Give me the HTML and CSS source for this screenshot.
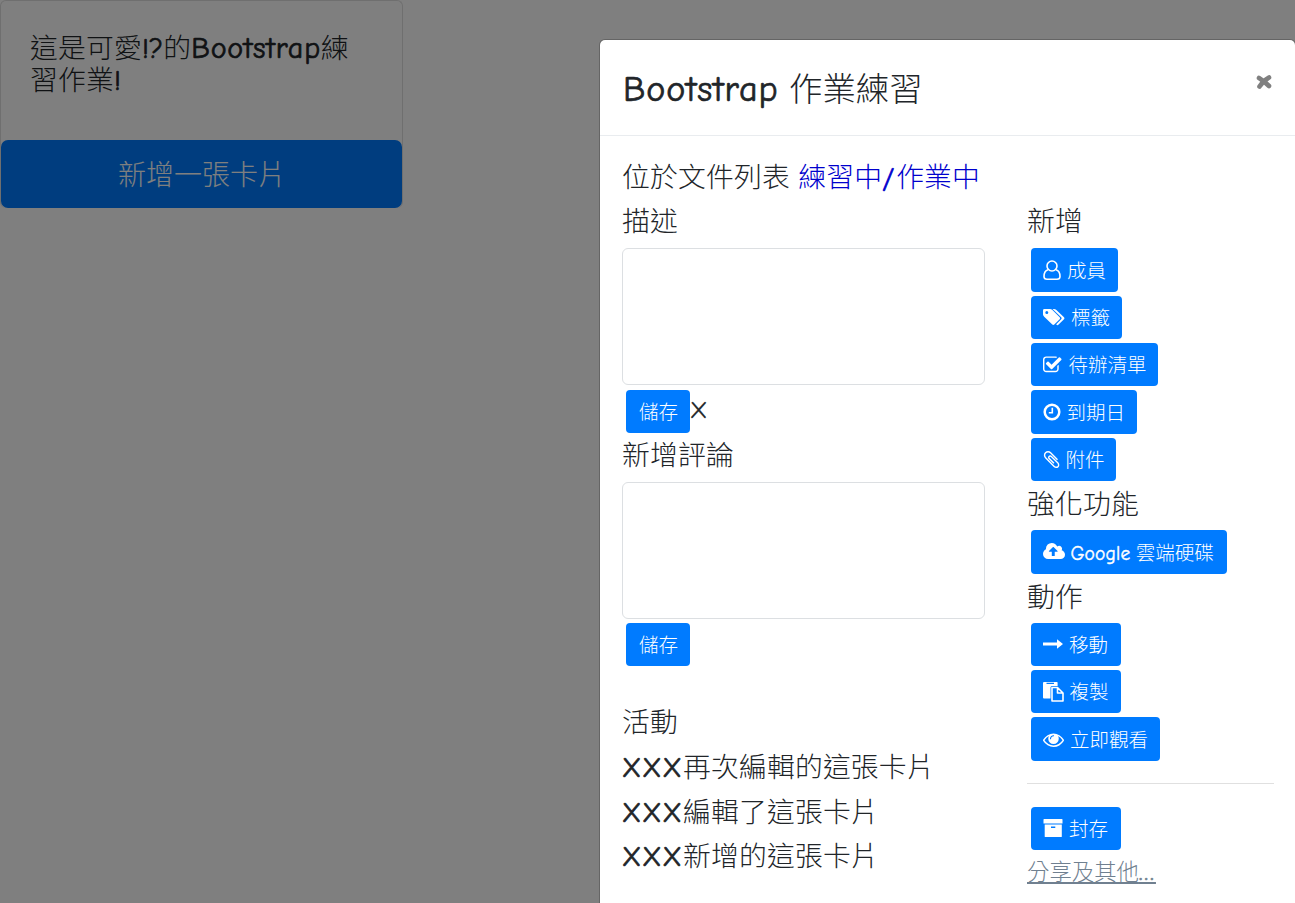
FILE: index.html
```html
<!DOCTYPE html>
<html lang="zh-Hant">
<head>
<meta charset="utf-8">
<title>Bootstrap 作業練習</title>
<link rel="stylesheet" href="styles.css">
</head>
<body>
<main class="card">
  <h5 class="card-title">這是可愛<span class="en card-mark">!?</span>的<span class="en word">Bootstrap</span>練<br>習作業<span class="en">!</span></h5>
  <button class="btn-add">新增一張卡片</button>
</main>
<div class="backdrop"></div>
<div class="modal">
  <header class="modal-header">
    <h4><span class="en word">Bootstrap</span> 作業練習</h4>
    <button class="close" aria-label="Close"><svg width="16" height="14" viewBox="0 0 16 14"><path d="M3 3Q8 6 13 11M13 2.5Q7 6 3.5 11.5" fill="none" stroke="currentColor" stroke-width="4.6" stroke-linecap="round"/></svg></button>
  </header>
  <div class="modal-body">
    <h5>位於文件列表 <span class="path">練習中<span class="en slash">/</span>作業中</span></h5>
    <div class="columns">
      <section class="left">
        <h5>描述</h5>
        <textarea></textarea>
        <div class="save-row"><button class="btn save"><span class="label">儲存</span></button><span class="en cancel">X</span></div>
        <h5>新增評論</h5>
        <textarea></textarea>
        <div class="save-row last"><button class="btn save"><span class="label">儲存</span></button></div>
        <h5>活動</h5>
        <h5><span class="en xs">XXX</span>再次編輯的這張卡片</h5>
        <h5><span class="en xs">XXX</span>編輯了這張卡片</h5>
        <h5><span class="en xs">XXX</span>新增的這張卡片</h5>
      </section>
      <aside class="right">
        <h5>新增</h5>
        <div class="group">
          <button class="btn w87"><svg width="18" height="21" viewBox="0 -1 18 21"><g fill="none" stroke="currentColor" stroke-width="1.6"><circle cx="9" cy="6" r="5"/><path d="M5 9.7C2 10.5 1 13 1 16.5Q1 19.2 4 19.2H14Q17 19.2 17 16.5C17 13 16 10.5 13 9.7"/></g></svg><span class="label">成員</span></button>
          <button class="btn w91"><svg width="22" height="18" viewBox="0 0 22 18"><path fill="currentColor" fill-rule="evenodd" d="M0 2.4Q0 1 1.4 1H7Q8.3 1 9.4 2L16.7 9.2Q17.7 10.2 16.7 11.2L11.3 16.6Q10.3 17.5 9.3 16.6L1.2 8.7Q0 7.6 0 6.5ZM3.8 3A1.5 1.5 0 1 0 3.8 6A1.5 1.5 0 1 0 3.8 3Z"/><path fill="currentColor" d="M9.5 1H11Q12.3 1 13.4 2L21 9.2Q22 10.2 21 11.2L15.6 16.6Q14.3 17.8 13.2 16.3L18.2 11.3Q19.2 10.2 18.2 9.2Z"/></svg><span class="label">標籤</span></button>
          <button class="btn w127"><svg width="20" height="20" viewBox="64 0 1792 1792"><path fill="currentColor" d="M1472 930v318q0 119-84.5 203.5t-203.5 84.5h-832q-119 0-203.5-84.5t-84.5-203.5v-832q0-119 84.5-203.5t203.5-84.5h832q63 0 117 25 15 7 18 23 3 17-9 29l-49 49q-10 10-23 10-3 0-9-2-23-6-45-6h-832q-66 0-113 47t-47 113v832q0 66 47 113t113 47h832q66 0 113-47t47-113v-254q0-13 9-22l64-64q10-10 23-10 6 0 12 3 20 8 20 29zm231-489l-814 814q-24 24-57 24t-57-24l-430-430q-24-24-24-57t24-57l110-110q24-24 57-24t57 24l263 263 647-647q24-24 57-24t57 24l110 110q24 24 24 57t-24 57z"/></svg><span class="label tight">待辦清單</span></button>
          <button class="btn w106"><svg width="18" height="18" viewBox="0 0 18 18"><g fill="none" stroke="currentColor"><circle cx="9" cy="9" r="7.3" stroke-width="2.5"/><path d="M9.3 4.7V9.8H5.8" stroke-width="1.6"/></g></svg><span class="label tight">到期日</span></button>
          <button class="btn w85"><svg width="17" height="19" viewBox="120 32 1536 1717"><path fill="currentColor" d="M1596 1385q0 117-79 196t-196 79q-135 0-235-100l-777-776q-113-115-113-271 0-159 110-270t269-111q158 0 273 113l605 606q10 10 10 22 0 16-30.5 46.5t-46.5 30.5q-13 0-23-10l-606-607q-79-77-181-77-106 0-179 75t-73 181q0 105 76 181l776 777q63 63 145 63 64 0 106-42t42-106q0-82-63-145l-581-581q-26-24-60-24-29 0-48 19t-19 48q0 32 25 59l410 410q10 10 10 22 0 16-31 47t-47 31q-12 0-22-10l-410-410q-63-61-63-149 0-82 57-139t139-57q88 0 149 63l581 581q100 98 100 235z"/></svg><span class="label tight">附件</span></button>
        </div>
        <h5>強化功能</h5>
        <div class="group">
          <button class="btn w196"><svg width="22" height="20" viewBox="-64 50 1920 1745"><path fill="currentColor" d="M1216 864q0-14-9-23l-352-352q-9-9-23-9t-23 9l-351 351q-10 12-10 24 0 14 9 23t23 9h224v352q0 13 9.5 22.5t22.5 9.5h192q13 0 22.5-9.5t9.5-22.5v-352h224q13 0 22.5-9.5t9.5-22.5zm640 288q0 159-112.5 271.5t-271.5 112.5h-1088q-185 0-316.5-131.5t-131.5-316.5q0-130 70-240t188-165q-2-30-2-43 0-212 150-362t362-150q156 0 285.5 87t188.5 231q71-62 166-62 106 0 181 75t75 181q0 76-41 138 130 31 213.5 135.5t83.5 238.5z"/></svg><span class="label tight"><span class="en google">Google</span> 雲端硬碟</span></button>
        </div>
        <h5>動作</h5>
        <div class="group">
          <button class="btn w90"><svg width="20" height="12" viewBox="0 0 20 12"><path fill="currentColor" d="M0 4.6H14V1.2L20 6L14 10.8V7.4H0Z"/></svg><span class="label">移動</span></button>
          <button class="btn w90"><svg width="21" height="21" viewBox="0 0 21 21"><path fill="currentColor" fill-rule="evenodd" d="M1 1H14Q14.6 1 14.6 1.8V5H9Q7.5 5 7.5 6.5V17.5H1Q0 17.5 0 16.5V2Q0 1 1 1ZM3.5 1.8V3.1H11V1.8Z"/><path fill="none" stroke="currentColor" stroke-width="1.6" stroke-linejoin="round" d="M9 6.5H14.5L20 12V20H9ZM14.5 6.5V12H20"/></svg><span class="label tight">複製</span></button>
          <button class="btn w129"><svg width="21" height="21" viewBox="0 0 1792 1792"><path fill="currentColor" d="M1664 960q-152-236-381-353 61 104 61 225 0 185-131.5 316.5t-316.5 131.5-316.5-131.5-131.5-316.5q0-121 61-225-229 117-381 353 133 205 333.5 326.5t434.5 121.5 434.5-121.5 333.5-326.5zm-720-384q0-20-14-34t-34-14q-125 0-214.5 89.5t-89.5 214.5q0 20 14 34t34 14 34-14 14-34q0-86 61-147t147-61q20 0 34-14t14-34zm848 384q0 34-20 69-140 230-376.5 368.5t-499.5 138.5-499.5-139-376.5-368q-20-35-20-69t20-69q140-229 376.5-368t499.5-139 499.5 139 376.5 368q20 35 20 69z"/></svg><span class="label">立即觀看</span></button>
        </div>
        <hr>
        <div class="group archive">
          <button class="btn w90"><svg width="20" height="18" viewBox="-.5 0 20 18"><path fill="currentColor" fill-rule="evenodd" d="M.6 0H18.4Q19 0 19 .6V4.4H0V.6Q0 0 .6 0ZM1.2 5.5H18.3V17.4Q18.3 18 17.7 18H1.8Q1.2 18 1.2 17.4ZM7.5 7.5V9H11.8V7.5Z"/></svg><span class="label">封存</span></button>
        </div>
        <a class="share">分享及其他<span class="en dots">...</span></a>
      </aside>
    </div>
  </div>
</div>
</body>
</html>
```
FILE: styles.css
```css
* { box-sizing: border-box; }
html, body { height: 100%; overflow: hidden; }
body {
  margin: 0;
  background: #fff;
  color: #212529;
  font-family: "Noto Sans CJK TC", sans-serif;
  font-weight: 300;
}
h4, h5 { margin: 0; font-weight: 300; white-space: nowrap; }
h5 { font-size: 27.8px; line-height: 33.6px; height: 33.6px; margin-bottom: 11.2px; letter-spacing: .2px; }
button { font-family: inherit; font-weight: 300; border: 0; padding: 0; }
svg { display: block; flex: none; }
.en { font-family: "Comic Sans MS", "Comic Neue", "Open Sans", sans-serif; font-weight: 500; line-height: 0; -webkit-text-stroke: .7px currentColor; }
.word { font-size: 1.08em; letter-spacing: .026em; }
.xs { letter-spacing: .045em; }
.slash { letter-spacing: .06em; }
.dots { letter-spacing: .1em; }

.card { width: 403px; height: 208px; border: 1px solid #dfdfdf; border-bottom: 0; border-radius: 6px; display: flex; flex-direction: column; }
.card-title { height: 139px; padding: 29px 29px 0; line-height: 32px; margin: 0; }
.card-mark { letter-spacing: .01em; }
.btn-add { width: 401px; height: 68px; flex: none; border-radius: 7px; background: #007bff; color: #fff; font-size: 28px; padding: 0 0 2px 1px; }

.backdrop { position: absolute; inset: 0; background: rgba(0, 0, 0, .5); }
.modal { position: absolute; left: 599px; top: 39.2px; width: 697px; height: 900px; background: #fff; background-clip: padding-box; border: 1px solid rgba(0, 0, 0, .2); border-radius: 6px; }
.modal-header { height: 96px; padding: 21.4px 23px; display: flex; justify-content: space-between; border-bottom: 1px solid #e9ecef; }
.modal-header h4 { font-size: 33.4px; line-height: 50.4px; word-spacing: 3px; }
.close { width: 16px; height: 14px; margin-top: 13px; background: none; color: #808080; }
.modal-body { padding: 22.4px 21px 0 22px; }
.path { color: #0000cd; margin-left: 2px; }
.columns { display: flex; justify-content: space-between; }
.left { width: 363px; }
.right { width: 247px; }
textarea { display: block; width: 363px; height: 136.6px; border: 1px solid #dcdfe2; border-radius: 6px; resize: none; background: #fff; }
.save-row { display: flex; padding: 5px 0 0 4px; height: 52.4px; }
.save-row.last { height: 85.6px; padding-top: 4.6px; }
.cancel { font-size: 25px; line-height: 39px; -webkit-text-stroke-width: .3px; }

.btn { display: flex; align-items: center; gap: 6px; height: 43.4px; padding: 0 12px; border-radius: 4px; background: #007bff; color: #fff; font-size: 19.5px; line-height: 29px; white-space: nowrap; }
.label { padding-bottom: 1.6px; }
.tight { margin-left: -.6px; }
.btn .en { -webkit-text-stroke-width: .4px; }
.save { width: 64px; padding: 0 13px; }
.group { display: flex; flex-direction: column; align-items: flex-start; gap: 4px; padding-left: 4px; margin-bottom: 5px; }
.right .group + h5 { margin-bottom: 10.5px; }
.w85 { width: 85px; } .w87 { width: 87px; } .w90 { width: 90px; } .w91 { width: 91px; }
.w106 { width: 106px; } .w127 { width: 127px; } .w129 { width: 129px; } .w196 { width: 196px; }
.google { letter-spacing: .01em; margin-right: 1px; }
hr { border: 0; border-top: 1px solid #e0e0e0; margin: 22.4px 0; }
.archive { margin-bottom: 3.4px; }
.share { display: block; font-size: 22.4px; line-height: 34px; color: #708090; text-decoration: underline; white-space: nowrap; }
```
